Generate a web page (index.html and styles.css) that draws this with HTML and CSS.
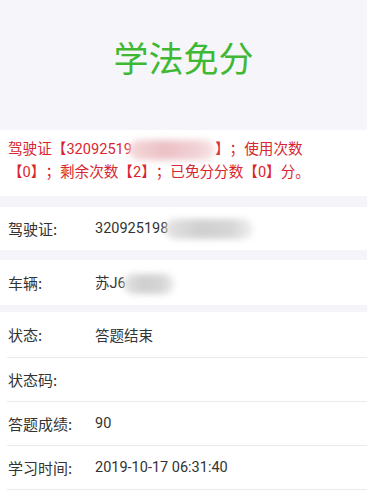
FILE: index.html
```html
<!DOCTYPE html>
<html lang="zh-CN">
<head>
<meta charset="utf-8">
<link rel="stylesheet" href="styles.css">
</head>
<body>
<div class="header"><h1 class="title">学法免分</h1></div>
<div class="notice">驾驶证【32092519<span class="blur blur-red"></span>】；使用次数<br>【0】；剩余次数【2】；已免分分数【0】分。</div>
<div class="gap gap-a"></div>
<div class="row row-a"><span class="label">驾驶证:</span><span class="value">320925198<span class="blur blur-grey blur-long"></span></span></div>
<div class="gap gap-b"></div>
<div class="row row-b"><span class="label">车辆:</span><span class="value">苏J6<span class="blur blur-grey blur-short"></span></span></div>
<div class="gap gap-c"></div>
<div class="list">
  <div class="row item"><span class="label">状态:</span><span class="value">答题结束</span></div>
  <div class="row item"><span class="label">状态码:</span><span class="value"></span></div>
  <div class="row item"><span class="label">答题成绩:</span><span class="value">90</span></div>
  <div class="row item"><span class="label">学习时间:</span><span class="value">2019-10-17 06:31:40</span></div>
</div>
</body>
</html>
```
FILE: styles.css
```css
* { box-sizing: border-box; }
body {
  margin: 0;
  background: #ffffff;
  font-family: Roboto, "Noto Sans CJK SC", sans-serif;
  color: #333333;
}
.header {
  height: 130px;
  background: #f6f5fa;
  display: flex;
  justify-content: center;
  padding-top: 33px;
}
.title {
  margin: 0;
  font-family: "Noto Sans CJK SC", sans-serif;
  font-weight: 400;
  font-size: 35px;
  line-height: 48px;
  color: #3fb834;
}
.notice {
  height: 66px;
  padding: 8px 8px 0 8px;
  font-size: 14.6px;
  line-height: 23px;
  color: #d8262f;
  white-space: nowrap;
  text-spacing-trim: space-all;
}
.blur {
  display: inline-block;
  vertical-align: middle;
  border-radius: 10px;
  filter: blur(3px);
}
.blur-red {
  width: 86px;
  height: 20px;
  margin-left: -3px;
  background: linear-gradient(90deg, #f5d9dc, #ebc0c5 40%, #f1cfd3 75%, #f7e4e6);
}
.blur-grey {
  height: 20px;
  margin-left: -3px;
  background: linear-gradient(90deg, #e4e4e4, #cfcfcf 40%, #d6d6d6 75%, #f0f0f0);
}
.blur-long { width: 88px; }
.blur-short { width: 52px; }
.gap { background: #f5f4f9; }
.gap-a { height: 11px; }
.gap-b { height: 10px; }
.gap-c { height: 7px; }
.row {
  display: flex;
  align-items: center;
  background: #ffffff;
  padding-left: 8px;
  font-size: 15px;
}
.row-a { height: 43px; }
.row-b { height: 45px; }
.label {
  width: 87px;
  flex: none;
  font-family: "Noto Sans CJK SC", sans-serif;
}
.value {
  font-size: 14.5px;
  white-space: nowrap;
}
.list { margin-left: 7px; }
.list .item {
  height: 45px;
  padding-left: 1px;
  border-bottom: 1px solid #e9e9ee;
}
.list .item:first-child { height: 46px; }
.list .item + .item { height: 44px; }
```
